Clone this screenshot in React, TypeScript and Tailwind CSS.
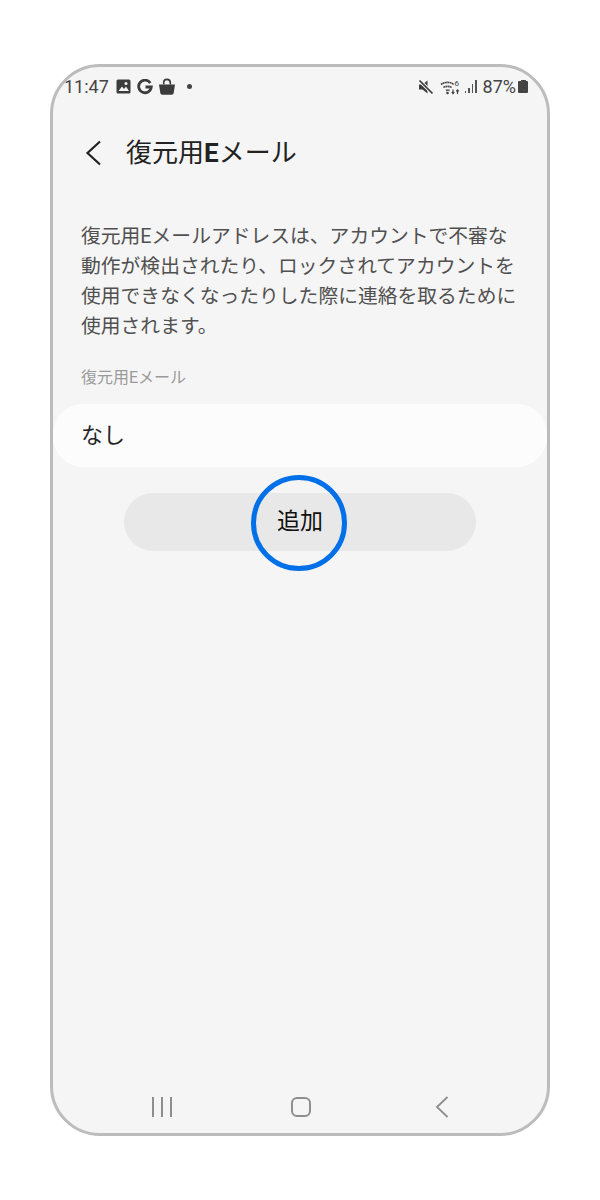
const jp = 'font-["Roboto","Noto_Sans_CJK_JP",sans-serif]';

function StatusBar() {
    return (
        <div className="flex h-[38px] items-center justify-between pl-[11px] pr-[19px] pt-[1px] text-[18px] text-[#444444]">
            <div className="flex items-center">
                <span>11:47</span>
                <svg width="17" height="17" viewBox="0 0 17 17" className="ml-[6px]">
                    <path d="M3 1.500h11A1.500 1.500 0 0 1 15.500 3v11a1.500 1.500 0 0 1-1.500 1.500H3A1.500 1.500 0 0 1 1.500 14V3A1.500 1.500 0 0 1 3 1.500Z" fill="#3c3c3c" />
                    <path d="M3.500 13 7 8.500l2 2.500 2-2.500 3 4.500Z" fill="#f5f5f5" />
                    <circle cx="11" cy="5.500" r="1.500" fill="#f5f5f5" />
                </svg>
                <svg width="16" height="16" viewBox="0 0 16 16" className="ml-[5px]">
                    <path d="M13.300 4A6.300 6.300 0 1 0 14.300 8H8.500" fill="none" stroke="#3c3c3c" strokeWidth="2.800" />
                </svg>
                <svg width="18" height="18" viewBox="0 0 18 18" className="ml-[5px]">
                    <path d="M1 6.500h16l-1.300 8.500a2 2 0 0 1-2 1.700H4.300a2 2 0 0 1-2-1.700Z" fill="#3c3c3c" />
                    <path d="M5.700 6.500V4.700a3.300 3.300 0 0 1 6.600 0v1.800" fill="none" stroke="#3c3c3c" strokeWidth="1.600" />
                </svg>
                <span className="ml-[11px] h-[5px] w-[5px] rounded-full bg-[#444444]" />
            </div>
            <div className="flex items-center">
                <svg width="16" height="16" viewBox="0 0 16 16">
                    <path d="M1 5.500h3.500L9.500 1.500v13l-5-4H1Z" fill="#3c3c3c" />
                    <path d="M1.500 1.500 14.500 14.500" stroke="#f5f5f5" strokeWidth="3.500" />
                    <path d="M1.500 1.500 14.500 14.500" stroke="#3c3c3c" strokeWidth="1.700" />
                </svg>
                <svg width="22" height="18" viewBox="0 0 22 18" className="ml-[6px]">
                    <path d="M1 6.500a11 11 0 0 1 13 0M3.500 9.500a7.500 7.500 0 0 1 8 0M6 12.500a4 4 0 0 1 3.500 0" fill="none" stroke="#444444" strokeWidth="1.600" strokeDasharray="1.800 .4" />
                    <circle cx="7.500" cy="15" r="1.300" fill="#444444" />
                    <path d="M13 15.500v-4M11.700 14 13 15.700l1.300-1.700M17.500 16v-4M16.200 13.300 17.500 11.800l1.300 1.500" fill="none" stroke="#444444" strokeWidth="1.200" />
                    <text x="14.500" y="7.500" fontSize="8" fill="#444444">6</text>
                </svg>
                <div className="ml-[3px] flex items-end gap-[2px]">
                    <span className="h-[2px] w-[1.500px] bg-[#555555]" />
                    <span className="h-[5px] w-[1.500px] bg-[#555555]" />
                    <span className="h-[9px] w-[1.500px] bg-[#555555]" />
                    <span className="h-[13px] w-[1.500px] bg-[#555555]" />
                </div>
                <span className="ml-[6px]">87%</span>
                <div className="ml-[2px] flex flex-col items-center">
                    <span className="h-[1.500px] w-[5px] bg-[#444444]" />
                    <span className="h-[12px] w-[10px] rounded-[1px] bg-[#444444]" />
                </div>
            </div>
        </div>
    );
}

function NavBar() {
    return (
        <div className="mt-auto flex h-[62px] items-start justify-center pt-[25px]">
            <div className="flex w-[297px] items-center justify-between">
                <div className="flex w-[20px] justify-between">
                    <span className="h-[20px] w-[2px] bg-[#8e8e8e]" />
                    <span className="h-[20px] w-[2px] bg-[#8e8e8e]" />
                    <span className="h-[20px] w-[2px] bg-[#8e8e8e]" />
                </div>
                <span className="mr-[4px] h-[20px] w-[20px] rounded-[6px] border-2 border-[#8e8e8e]" />
                <svg width="14" height="22" viewBox="0 0 14 22">
                    <path d="M12.500 1 2 11l10.500 10" fill="none" stroke="#8e8e8e" strokeWidth="1.800" />
                </svg>
            </div>
        </div>
    );
}

export default function App() {
    return (
        <div className={`h-[1200px] bg-white px-[50px] pb-[64px] pt-[64px] ${jp}`}>
            <div className="flex h-[1072px] flex-col overflow-hidden rounded-[50px] border-[3px] border-[#bcbcbc] bg-[#f5f5f5]">
                <StatusBar />
                <div className="mt-[28px] flex items-center pl-[32px]">
                    <svg width="18" height="26" viewBox="0 0 18 26" className="text-[#222222]">
                        <path d="M15 1.500 2.500 13 15 24.500" fill="none" stroke="currentColor" strokeWidth="2.200" />
                    </svg>
                    <h1 className="ml-[23px] text-[26px] leading-[40px] text-[#222222]">
                        復元用<b className="font-bold">E</b>メール
                    </h1>
                </div>
                <p className="mt-[49px] pl-[28px] pr-[20px] text-[19.800px] leading-[30px] text-[#505050]">
                    復元用Eメールアドレスは、アカウントで不審な動作が検出されたり、ロックされてアカウントを使用できなくなったりした際に連絡を取るために使用されます。
                </p>
                <div className="mt-[24px] px-[28px] text-[16px] leading-[24px] text-[#9a9a9a]">復元用Eメール</div>
                <div className="mt-[14px] flex h-[63px] items-center rounded-[30px] bg-[#fcfcfc] px-[28px] text-[22px] text-[#252525]">
                    なし
                </div>
                <div className="relative mx-[71px] mt-[26px] flex h-[58px] items-center justify-center rounded-[29px] bg-[#e8e8e8] text-[23px] text-[#111111]">
                    追加
                    <span className="absolute left-[127px] top-[-18px] h-[96px] w-[96px] rounded-full border-[5px] border-[#0070e8]" />
                </div>
                <NavBar />
            </div>
        </div>
    );
}
